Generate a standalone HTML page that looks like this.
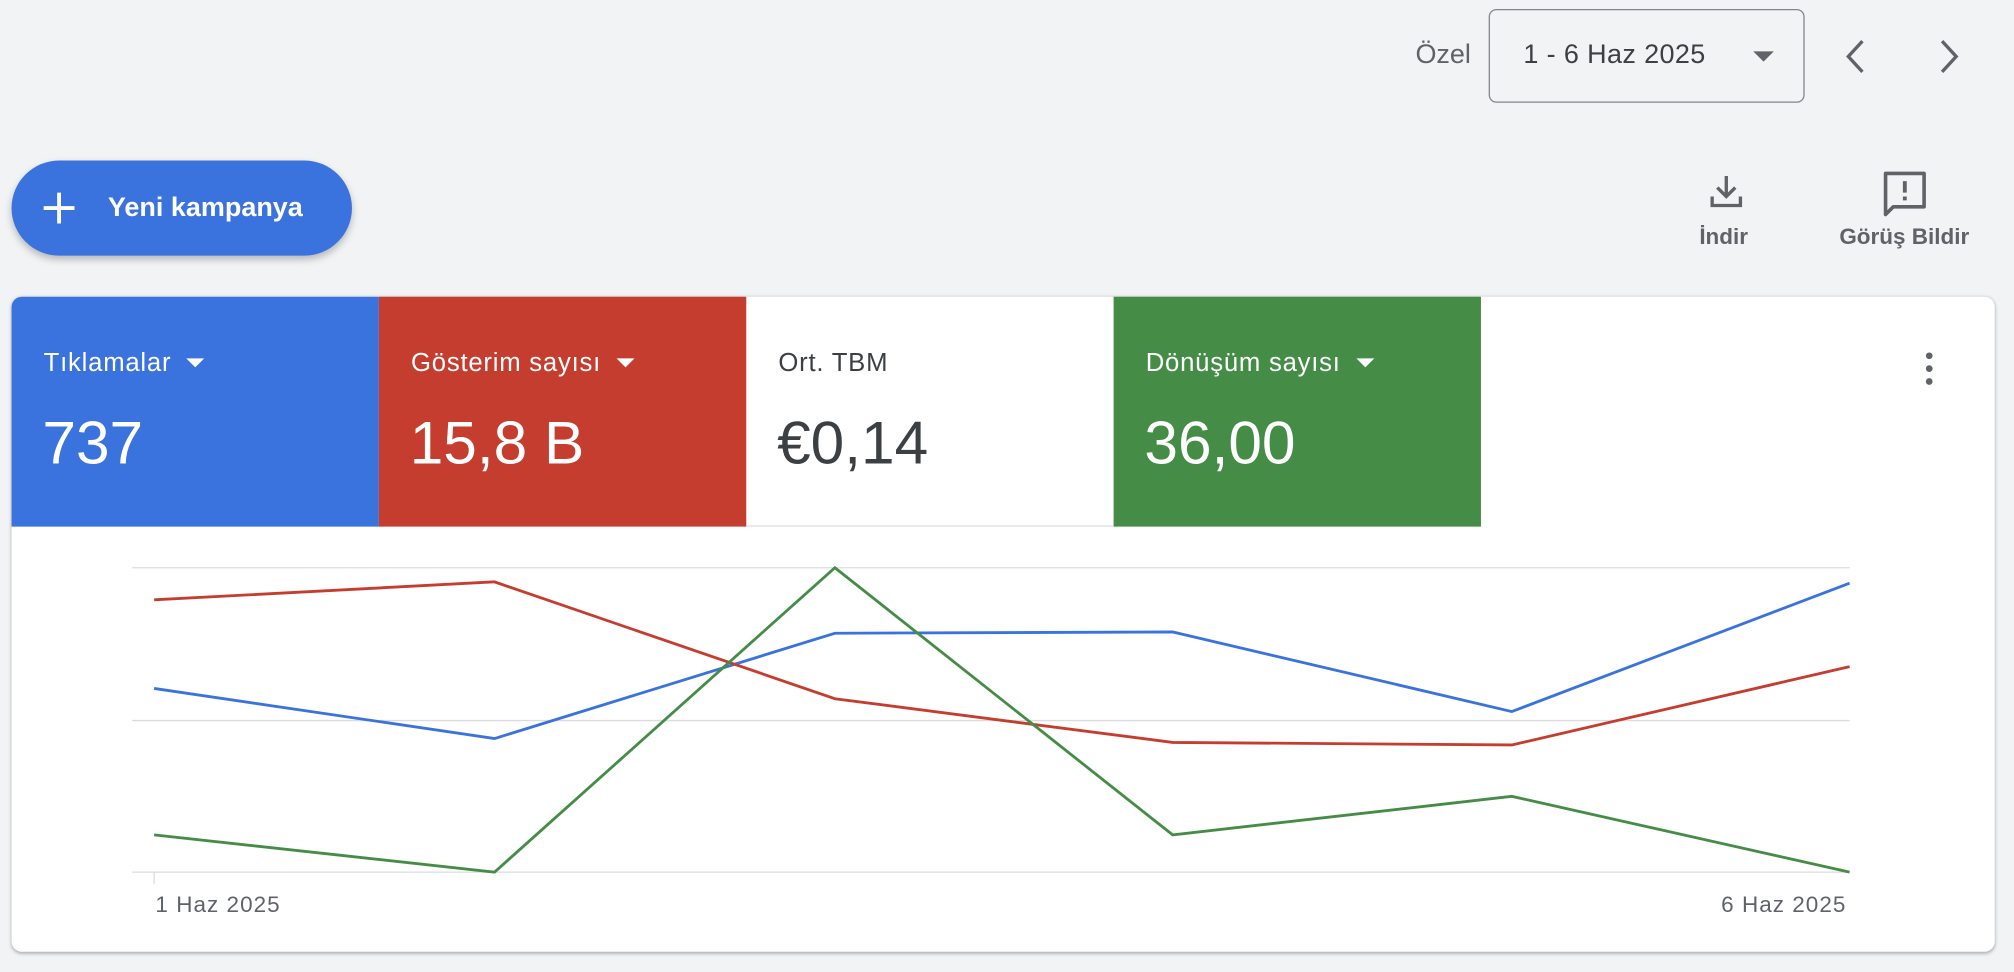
<!DOCTYPE html>
<html><head><meta charset="utf-8"><style>
html,body{margin:0;padding:0;background:#f1f3f4;overflow:hidden;width:2014px;height:972px}
#w{position:absolute;left:0;top:0;width:1568px;height:757px;transform:scale(1.28444);transform-origin:0 0;font-family:"Liberation Sans",sans-serif;color:#3c4043}
.a{position:absolute;white-space:nowrap}
.tile{position:absolute;top:231px;height:179px;width:286px;color:#fff}
.tile .l{position:absolute;left:25px;top:41px;font-size:20px;letter-spacing:.6px}
.tile .v{position:absolute;left:24px;top:86px;font-size:47px}
.tri{display:inline-block;width:0;height:0;border-left:7px solid transparent;border-right:7px solid transparent;border-top:7px solid currentColor;vertical-align:middle;margin-left:12px;margin-top:-3px}
</style></head><body><div id="w">
<div class="a" style="left:1102px;top:31px;font-size:21px;color:#5f6368">Özel</div>
<div class="a" style="left:1159px;top:7px;width:246px;height:73px;border:1.3px solid #80868b;border-radius:6px;box-sizing:border-box"></div>
<div class="a" style="left:1186px;top:31px;font-size:21px;letter-spacing:.3px;color:#3c4043">1 - 6 Haz 2025</div>
<div class="a" style="left:1365px;top:40px;width:0;height:0;border-left:8px solid transparent;border-right:8px solid transparent;border-top:8px solid #5f6368"></div>
<svg class="a" style="left:1430px;top:28px" width="100" height="32"><path d="M20 4 L9 16 L20 28" fill="none" stroke="#5f6368" stroke-width="2.6"/><path d="M82 4 L93 16 L82 28" fill="none" stroke="#5f6368" stroke-width="2.6"/></svg>
<div class="a" style="left:9px;top:125px;width:265px;height:74px;border-radius:37px;background:#3a72de;box-shadow:0 3px 6px rgba(0,0,0,.25)"></div>
<svg class="a" style="left:33px;top:149px" width="26" height="26"><path d="M13 1V25M1 13H25" stroke="#fff" stroke-width="3"/></svg>
<div class="a" style="left:84px;top:150px;font-size:21px;color:#fff;font-weight:bold">Yeni kampanya</div>
<svg class="a" style="left:1329px;top:134px" width="30" height="30"><path d="M15 3V19M8 12L15 19L22 12" fill="none" stroke="#5f6368" stroke-width="2.6"/><path d="M4 19V26H26V19" fill="none" stroke="#5f6368" stroke-width="2.6"/></svg>
<div class="a" style="left:1323px;top:174px;font-size:17.5px;font-weight:bold;color:#5f6368">İndir</div>
<svg class="a" style="left:1464px;top:132px" width="40" height="40"><path d="M4 3H34V29H10L4 35Z" fill="none" stroke="#5f6368" stroke-width="2.8" stroke-linejoin="round"/><path d="M19 9V18M19 21V24" stroke="#5f6368" stroke-width="3"/></svg>
<div class="a" style="left:1432px;top:174px;font-size:17.5px;font-weight:bold;color:#5f6368">Görüş Bildir</div>
<div class="a" style="left:9px;top:231px;width:1544px;height:510px;background:#fff;border-radius:8px;box-shadow:0 1px 3px rgba(0,0,0,.3);overflow:hidden"></div>
<div class="tile" style="left:9px;background:#3a72de;border-top-left-radius:8px"><div class="l">Tıklamalar<span class="tri"></span></div><div class="v">737</div></div>
<div class="tile" style="left:295px;background:#c53d2e"><div class="l">Gösterim sayısı<span class="tri"></span></div><div class="v">15,8 B</div></div>
<div class="tile" style="left:581px;color:#3c4043;border-bottom:1px solid #e0e0e0;height:178px"><div class="l">Ort. TBM</div><div class="v">€0,14</div></div>
<div class="tile" style="left:867px;background:#458d47"><div class="l">Dönüşüm sayısı<span class="tri"></span></div><div class="v">36,00</div></div>
<svg class="a" style="left:1496px;top:273px" width="12" height="28"><circle cx="6" cy="4" r="2.6" fill="#5f6368"/><circle cx="6" cy="14" r="2.6" fill="#5f6368"/><circle cx="6" cy="24" r="2.6" fill="#5f6368"/></svg>
<svg class="a" style="left:0;top:0" width="1568" height="757">
<path d="M103 442H1440M103 561H1440M103 679H1440" stroke="#dadce0" stroke-width="1"/>
<path d="M120 679V688" stroke="#dadce0"/>
<polyline points="120,536 385,575 650,493 913,492 1177,554 1440,454" fill="none" stroke="#3a72de" stroke-width="2.2"/>
<polyline points="120,467 385,453 650,544 913,578 1177,580 1440,519" fill="none" stroke="#c53d2e" stroke-width="2.2"/>
<polyline points="120,650 385,679 650,442 913,650 1177,620 1440,679" fill="none" stroke="#458d47" stroke-width="2.2"/>
</svg>
<div class="a" style="left:121px;top:694px;font-size:17.5px;letter-spacing:.8px;color:#5f6368">1 Haz 2025</div>
<div class="a" style="left:1340px;top:694px;font-size:17.5px;letter-spacing:.8px;color:#5f6368">6 Haz 2025</div>
</div></body></html>
